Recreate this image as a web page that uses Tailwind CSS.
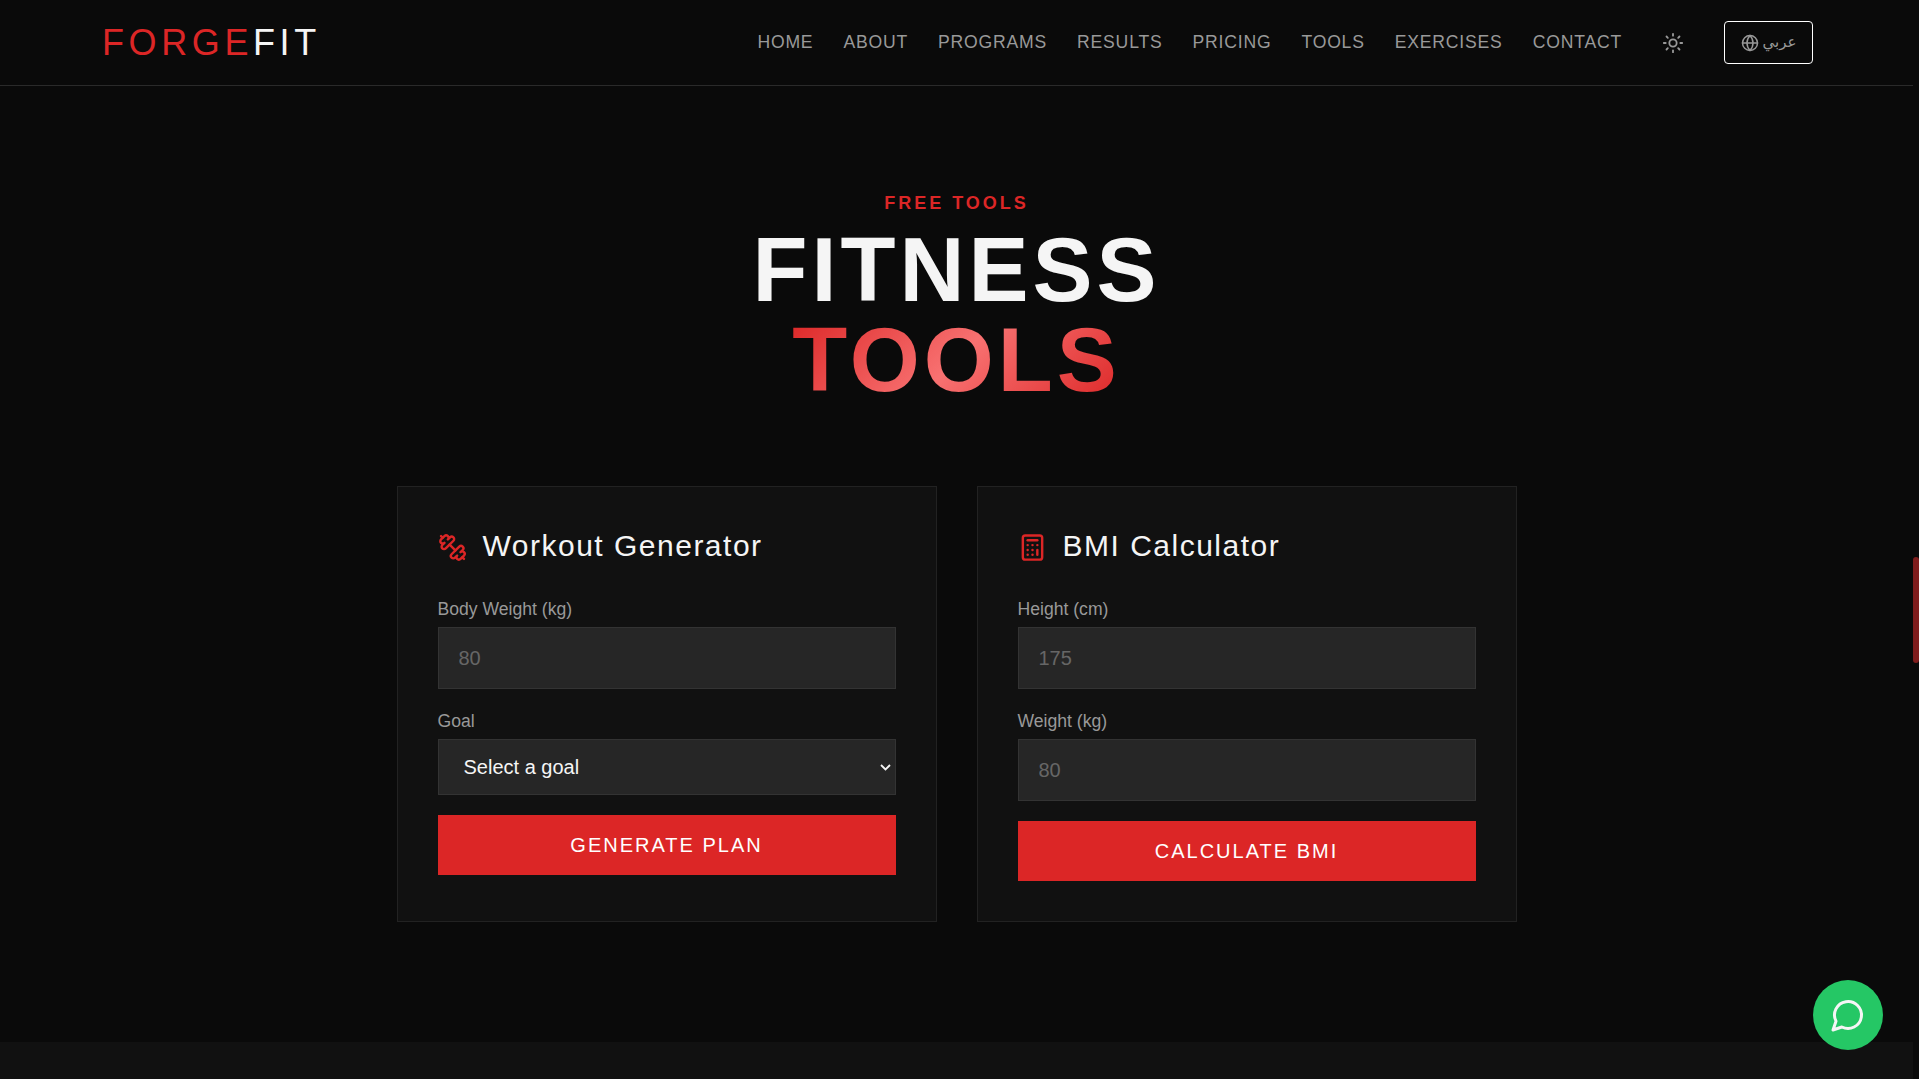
<!DOCTYPE html>
<html lang="en">
<head>
    <meta charset="UTF-8">
    <meta name="viewport" content="width=device-width, initial-scale=1.0">
    <title>ForgeFit - Fitness Tools</title>
    <script src="https://cdn.jsdelivr.net/npm/@tailwindcss/browser@4"></script>
</head>
<body class="h-screen overflow-hidden bg-[#0a0a0a] font-[family-name:'Liberation_Sans','DejaVu_Sans',sans-serif]">
    <div class="flex h-screen">
        <div class="flex min-w-0 flex-1 flex-col">
            <!-- Nav -->
            <header class="flex h-[86px] items-center border-b border-[#2a2a2a] pr-[100px] pl-[102px]">
                <a href="#" class="text-[36px] leading-none tracking-[4.6px] text-[#f5f5f5]"><span class="text-[#dc2626]">FORGE</span>FIT</a>
                <nav class="ml-auto flex items-center gap-[30px] text-[17.6px] tracking-[0.8px] text-[#999999]">
                    <a href="#">HOME</a>
                    <a href="#">ABOUT</a>
                    <a href="#">PROGRAMS</a>
                    <a href="#">RESULTS</a>
                    <a href="#">PRICING</a>
                    <a href="#">TOOLS</a>
                    <a href="#">EXERCISES</a>
                    <a href="#">CONTACT</a>
                </nav>
                <button class="ml-[32px] p-2 text-[#999999]">
                    <svg class="h-[22px] w-[22px]" viewBox="0 0 24 24" fill="none" stroke="currentColor" stroke-width="2" stroke-linecap="round" stroke-linejoin="round"><circle cx="12" cy="12" r="4"/><path d="M12 2v2"/><path d="M12 20v2"/><path d="m4.93 4.93 1.41 1.41"/><path d="m17.66 17.66 1.41 1.41"/><path d="M2 12h2"/><path d="M20 12h2"/><path d="m6.34 17.66-1.41 1.41"/><path d="m19.07 4.93-1.41 1.41"/></svg>
                </button>
                <button class="ml-[32px] flex h-[43px] w-[89px] items-center justify-center gap-1 rounded-[4px] border border-white text-[15px] text-[#999999]">
                    <svg class="h-[18px] w-[18px]" viewBox="0 0 24 24" fill="none" stroke="currentColor" stroke-width="2" stroke-linecap="round" stroke-linejoin="round"><circle cx="12" cy="12" r="10"/><path d="M12 2a14.5 14.5 0 0 0 0 20 14.5 14.5 0 0 0 0-20"/><path d="M2 12h20"/></svg>
                    <span>عربي</span>
                </button>
            </header>

            <!-- Tools section -->
            <main class="flex h-[956px] flex-col items-center pt-[103px]">
                <p class="mb-2 text-[18px] leading-[28px] font-bold tracking-[3px] text-[#dc2626]">FREE TOOLS</p>
                <h1 class="text-center text-[90px] leading-[90px] font-bold tracking-[4px] text-[#f5f5f5]">
                    FITNESS<br>
                    <span class="inline-block bg-[linear-gradient(135deg,#dc2626,#f87171,#dc2626)] bg-clip-text text-transparent">TOOLS</span>
                </h1>

                <div class="mt-[81px] grid w-[1120px] grid-cols-2 gap-10">
                    <!-- Workout generator -->
                    <section class="border border-[#222222] bg-[#111111] p-10">
                        <h2 class="mb-[30px] flex h-10 items-center gap-4 text-[30px] tracking-[1.5px] text-[#f5f5f5]">
                            <svg class="h-[29px] w-[29px] -scale-x-100 text-[#dc2626]" viewBox="0 0 24 24" fill="none" stroke="currentColor" stroke-width="2" stroke-linecap="round" stroke-linejoin="round"><path d="M17.596 12.768a2 2 0 1 0 2.829-2.829l-1.768-1.767a2 2 0 0 0 2.829-2.829l-2.829-2.828a2 2 0 0 0-2.828 2.829l-1.767-1.768a2 2 0 1 0-2.829 2.829z"/><path d="m2.5 21.5 1.4-1.4"/><path d="m20.1 3.9 1.4-1.4"/><path d="M5.343 21.485a2 2 0 1 0 2.829-2.828l1.767 1.768a2 2 0 1 0 2.829-2.829l-6.364-6.364a2 2 0 1 0-2.829 2.829l1.768 1.767a2 2 0 0 0-2.829 2.829z"/><path d="m9.6 14.4 4.8-4.8"/></svg>
                            <span class="pb-[3px]">Workout Generator</span>
                        </h2>
                        <div class="mb-5">
                            <label class="mb-[6px] block text-[17.6px] leading-[24px] text-[#999999]">Body Weight (kg)</label>
                            <input type="number" placeholder="80" class="block h-[62px] w-full border border-[#333333] bg-[#262626] px-5 text-[20px] text-[#f5f5f5] placeholder:text-[#666666]">
                        </div>
                        <div class="mb-5">
                            <label class="mb-[6px] block text-[17.6px] leading-[24px] text-[#999999]">Goal</label>
                            <div class="relative">
                                <select class="block h-[56px] w-full appearance-none border border-[#333333] bg-[#262626] pr-10 pl-[25px] text-[20px] text-[#f5f5f5]">
                                    <option>Select a goal</option>
                                    <option>Build muscle</option>
                                    <option>Lose fat</option>
                                </select>
                                <svg class="absolute top-[25px] right-[5px] h-[7px] w-[11px] text-[#f5f5f5]" viewBox="0 0 11 7" fill="none" stroke="currentColor" stroke-width="1.8"><path d="M1 1l4.5 4.5L10 1"/></svg>
                            </div>
                        </div>
                        <button class="h-[60px] w-full bg-[#dc2626] text-[20px] tracking-[2px] text-white">GENERATE PLAN</button>
                    </section>

                    <!-- BMI calculator -->
                    <section class="border border-[#222222] bg-[#111111] p-10">
                        <h2 class="mb-[30px] flex h-10 items-center gap-4 text-[30px] tracking-[1.5px] text-[#f5f5f5]">
                            <svg class="h-[29px] w-[29px] text-[#dc2626]" viewBox="0 0 24 24" fill="none" stroke="currentColor" stroke-width="2" stroke-linecap="round" stroke-linejoin="round"><rect width="16" height="20" x="4" y="2" rx="2"/><line x1="8" x2="16" y1="6" y2="6"/><line x1="16" x2="16" y1="14" y2="18"/><path d="M16 10h.01"/><path d="M12 10h.01"/><path d="M8 10h.01"/><path d="M12 14h.01"/><path d="M8 14h.01"/><path d="M12 18h.01"/><path d="M8 18h.01"/></svg>
                            <span class="pb-[3px]">BMI Calculator</span>
                        </h2>
                        <div class="mb-5">
                            <label class="mb-[6px] block text-[17.6px] leading-[24px] text-[#999999]">Height (cm)</label>
                            <input type="number" placeholder="175" class="block h-[62px] w-full border border-[#333333] bg-[#262626] px-5 text-[20px] text-[#f5f5f5] placeholder:text-[#666666]">
                        </div>
                        <div class="mb-5">
                            <label class="mb-[6px] block text-[17.6px] leading-[24px] text-[#999999]">Weight (kg)</label>
                            <input type="number" placeholder="80" class="block h-[62px] w-full border border-[#333333] bg-[#262626] px-5 text-[20px] text-[#f5f5f5] placeholder:text-[#666666]">
                        </div>
                        <button class="h-[60px] w-full bg-[#dc2626] text-[20px] tracking-[2px] text-white">CALCULATE BMI</button>
                    </section>
                </div>
            </main>

            <footer class="flex-1 bg-[#111111]"></footer>
        </div>

        <!-- Scrollbar track -->
        <div class="relative w-[6px] shrink-0">
            <div class="absolute top-[557px] h-[106px] w-[6px] rounded-[3px] bg-[#7f1d1d]"></div>
        </div>
    </div>

    <!-- Chat button -->
    <a href="#" class="fixed right-9 bottom-[29px] flex h-[70px] w-[70px] items-center justify-center rounded-full bg-[#25c765] text-[#f5f5f5]">
        <svg class="h-9 w-9" viewBox="0 0 24 24" fill="none" stroke="currentColor" stroke-width="2" stroke-linecap="round" stroke-linejoin="round"><path d="M7.9 20A9 9 0 1 0 4 16.1L2 22Z"/></svg>
    </a>
</body>
</html>
